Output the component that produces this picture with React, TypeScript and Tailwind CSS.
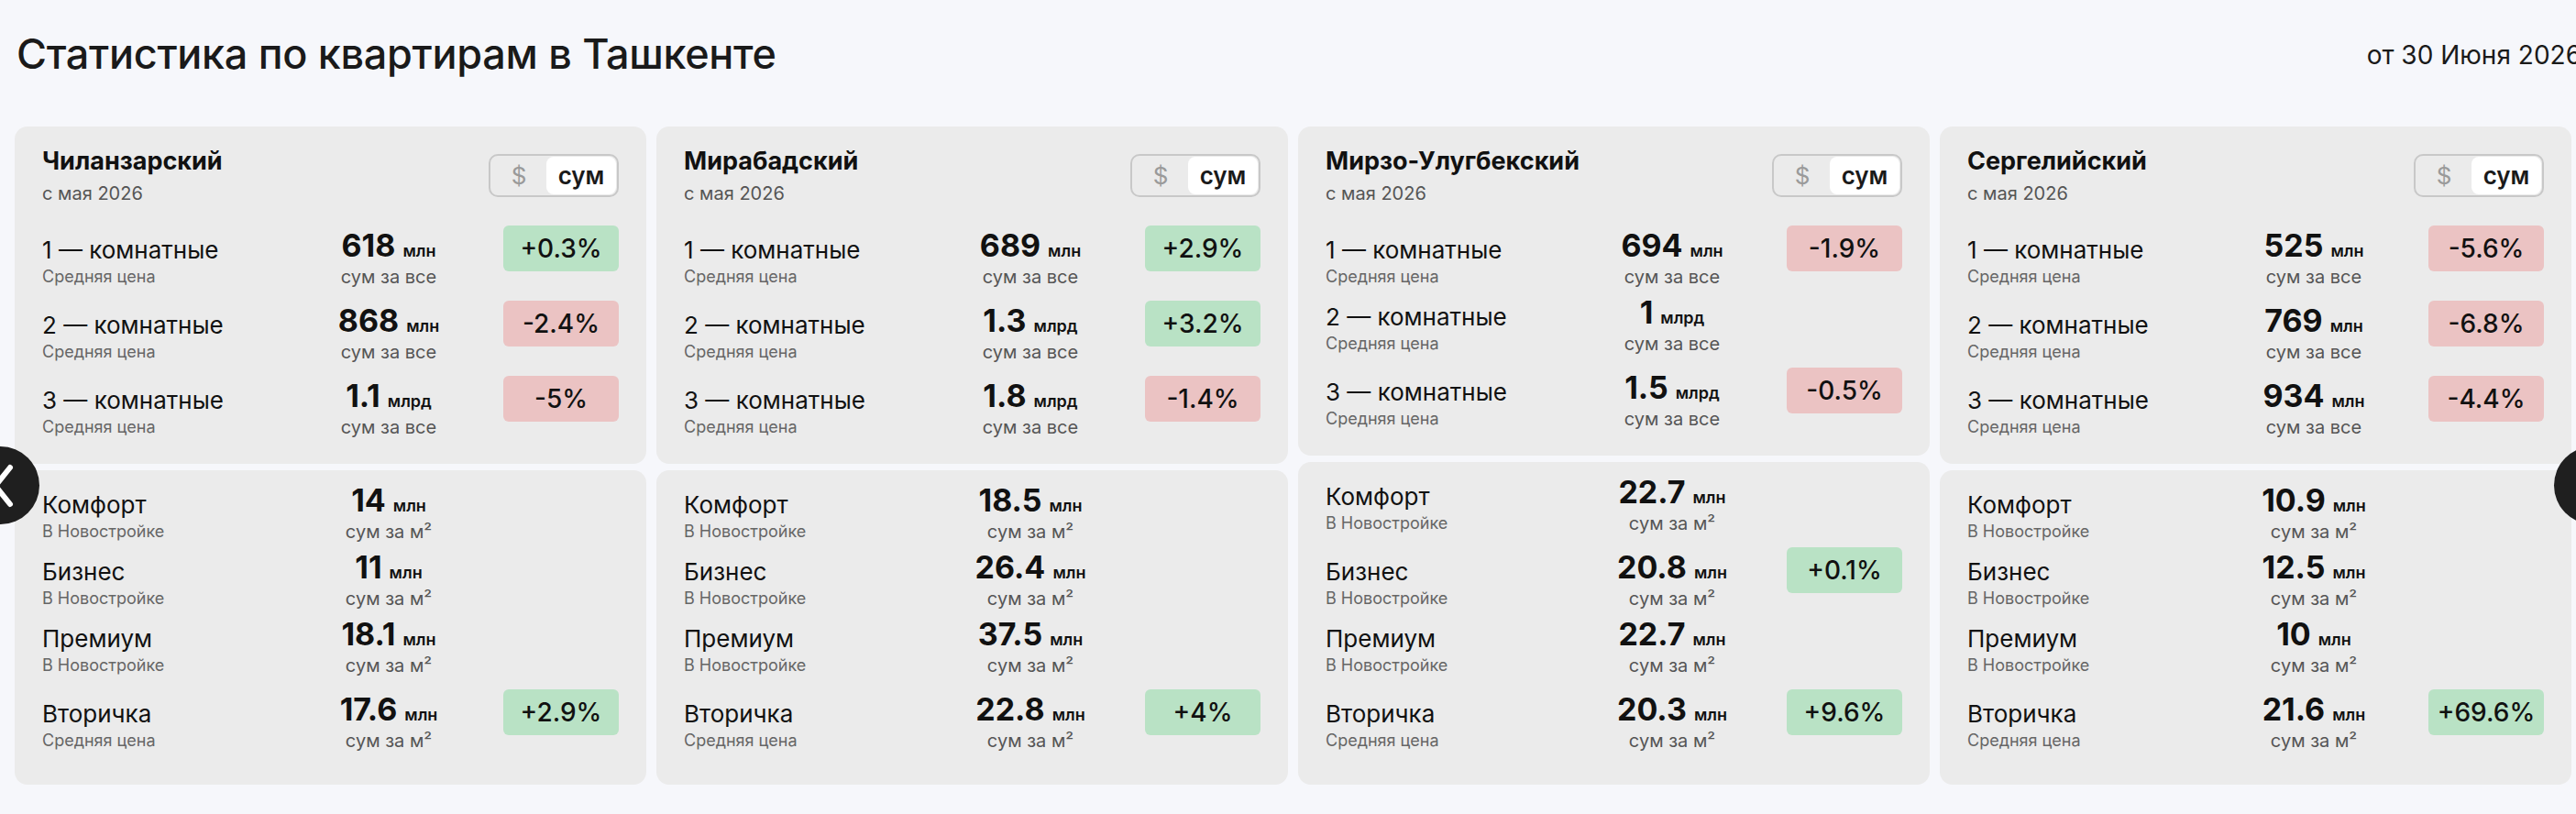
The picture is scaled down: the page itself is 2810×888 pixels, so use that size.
import React from "react";

type Badge = { text: string; up: boolean };
type Row = { title: string; sub: string; value: string; unit: string; note: string; badge?: Badge };
type Card = { name: string; top: Row[]; bottom: Row[] };

const up = (t: string): Badge => ({ text: t, up: true });
const down = (t: string): Badge => ({ text: t, up: false });

const room = (n: number, value: string, unit: string, badge?: Badge): Row => ({
  title: `${n} — комнатные`,
  sub: "Средняя цена",
  value,
  unit,
  note: "сум за все",
  badge,
});

const seg = (title: string, value: string, badge?: Badge, sub = "В Новостройке"): Row => ({
  title,
  sub,
  value,
  unit: "млн",
  note: "сум за м²",
  badge,
});

const cards: Card[] = [
  {
    name: "Чиланзарский",
    top: [room(1, "618", "млн", up("+0.3%")), room(2, "868", "млн", down("-2.4%")), room(3, "1.1", "млрд", down("-5%"))],
    bottom: [seg("Комфорт", "14"), seg("Бизнес", "11"), seg("Премиум", "18.1"), seg("Вторичка", "17.6", up("+2.9%"), "Средняя цена")],
  },
  {
    name: "Мирабадский",
    top: [room(1, "689", "млн", up("+2.9%")), room(2, "1.3", "млрд", up("+3.2%")), room(3, "1.8", "млрд", down("-1.4%"))],
    bottom: [seg("Комфорт", "18.5"), seg("Бизнес", "26.4"), seg("Премиум", "37.5"), seg("Вторичка", "22.8", up("+4%"), "Средняя цена")],
  },
  {
    name: "Мирзо-Улугбекский",
    top: [room(1, "694", "млн", down("-1.9%")), room(2, "1", "млрд"), room(3, "1.5", "млрд", down("-0.5%"))],
    bottom: [seg("Комфорт", "22.7"), seg("Бизнес", "20.8", up("+0.1%")), seg("Премиум", "22.7"), seg("Вторичка", "20.3", up("+9.6%"), "Средняя цена")],
  },
  {
    name: "Сергелийский",
    top: [room(1, "525", "млн", down("-5.6%")), room(2, "769", "млн", down("-6.8%")), room(3, "934", "млн", down("-4.4%"))],
    bottom: [seg("Комфорт", "10.9"), seg("Бизнес", "12.5"), seg("Премиум", "10"), seg("Вторичка", "21.6", up("+69.6%"), "Средняя цена")],
  },
];

function StatRow({ row }: { row: Row }) {
  const hasBadge = !!row.badge;
  return (
    <div className="grid grid-cols-[278px_200px_1fr] items-start">
      <div className={hasBadge ? "mt-[12px]" : "mt-[3px]"}>
        <div className="whitespace-nowrap text-[26px] leading-[30px] text-[#111]">{row.title}</div>
        <div className="mt-[3px] whitespace-nowrap text-[18px] leading-[22px] text-[#666]">{row.sub}</div>
      </div>
      <div className={`flex flex-col items-center ${hasBadge ? "mt-[9px]" : "mt-0"}`}>
        <div className="h-[26px] whitespace-nowrap text-[34px] font-bold leading-[26px] text-[#111]">
          {row.value}
          <span className="ml-[8px] text-[18px] font-semibold leading-[0px]">{row.unit}</span>
        </div>
        <div className="mt-[9px] whitespace-nowrap text-[20px] leading-[24px] text-[#555]">{row.note}</div>
      </div>
      {row.badge ? (
        <div
          className={`flex h-[50px] w-[126px] items-center justify-center justify-self-end whitespace-nowrap rounded-[6px] text-[28px] font-medium leading-none text-[#111] ${
            row.badge.up ? "bg-[#b9e2c5]" : "bg-[#ebc3c3]"
          }`}
        >
          {row.badge.text}
        </div>
      ) : (
        <div />
      )}
    </div>
  );
}

function Toggle() {
  return (
    <div className="mt-[7px] flex h-[47px] w-[142px] items-stretch rounded-[10px] border-2 border-[#c8c8c8] p-[1px]">
      <div className="flex w-[60px] items-center justify-center text-[26px] text-[#9a9a9a]">$</div>
      <div className="flex flex-1 items-center justify-center rounded-[8px] bg-white text-[26px] font-semibold text-[#1a1a1a]">
        сум
      </div>
    </div>
  );
}

function DistrictCard({ card }: { card: Card }) {
  return (
    <div className="flex w-[689px] shrink-0 flex-col gap-[7px]">
      <div className="rounded-[14px] bg-[#ebebeb] px-[30px] pb-[28px] pt-[23px]">
        <div className="flex items-start justify-between">
          <div>
            <div className="whitespace-nowrap text-[27px] font-bold leading-[30px] text-[#111]">{card.name}</div>
            <div className="mt-[8px] text-[20px] leading-[24px] text-[#555]">с мая 2026</div>
          </div>
          <Toggle />
        </div>
        <div className="mt-[23px] flex flex-col gap-[14px]">
          {card.top.map((r, i) => (
            <StatRow key={i} row={r} />
          ))}
        </div>
      </div>
      <div className="flex-1 rounded-[14px] bg-[#ebebeb] px-[30px] pb-[36px] pt-[20px]">
        <div className="flex flex-col gap-[14px]">
          {card.bottom.map((r, i) => (
            <StatRow key={i} row={r} />
          ))}
        </div>
      </div>
    </div>
  );
}

export default function App() {
  return (
    <div className="relative h-[888px] w-full overflow-hidden bg-[#f6f7fb] font-['Inter',sans-serif] text-[#111]">
      <div className="flex items-start justify-between pl-[18px] pt-[31px]">
        <h1 className="whitespace-nowrap text-[45px] font-medium leading-[56px] tracking-[-0.3px] text-[#1a1a1a]">
          Статистика по квартирам в Ташкенте
        </h1>
        <div className="mr-[-6px] mt-[13px] whitespace-nowrap text-[28px] leading-[32px] text-[#1a1a1a]">от 30 Июня 2026</div>
      </div>
      <div className="mt-[51px] flex gap-[11px] pl-[16px]">
        {cards.map((c) => (
          <DistrictCard key={c.name} card={c} />
        ))}
      </div>
      <div className="absolute left-[-42px] top-[487px] flex h-[85px] w-[85px] items-center justify-center rounded-full bg-[#1f1f1f]">
        <svg width="34" height="48" viewBox="0 0 34 48" fill="none" className="ml-[6px]">
          <path d="M24 4 L8 24 L24 44" stroke="white" strokeWidth="6" strokeLinecap="round" strokeLinejoin="round" />
        </svg>
      </div>
      <div className="absolute left-[2786px] top-[487px] flex h-[85px] w-[85px] items-center justify-center rounded-full bg-[#1f1f1f]">
        <svg width="34" height="48" viewBox="0 0 34 48" fill="none">
          <path d="M10 4 L26 24 L10 44" stroke="white" strokeWidth="6" strokeLinecap="round" strokeLinejoin="round" />
        </svg>
      </div>
    </div>
  );
}
